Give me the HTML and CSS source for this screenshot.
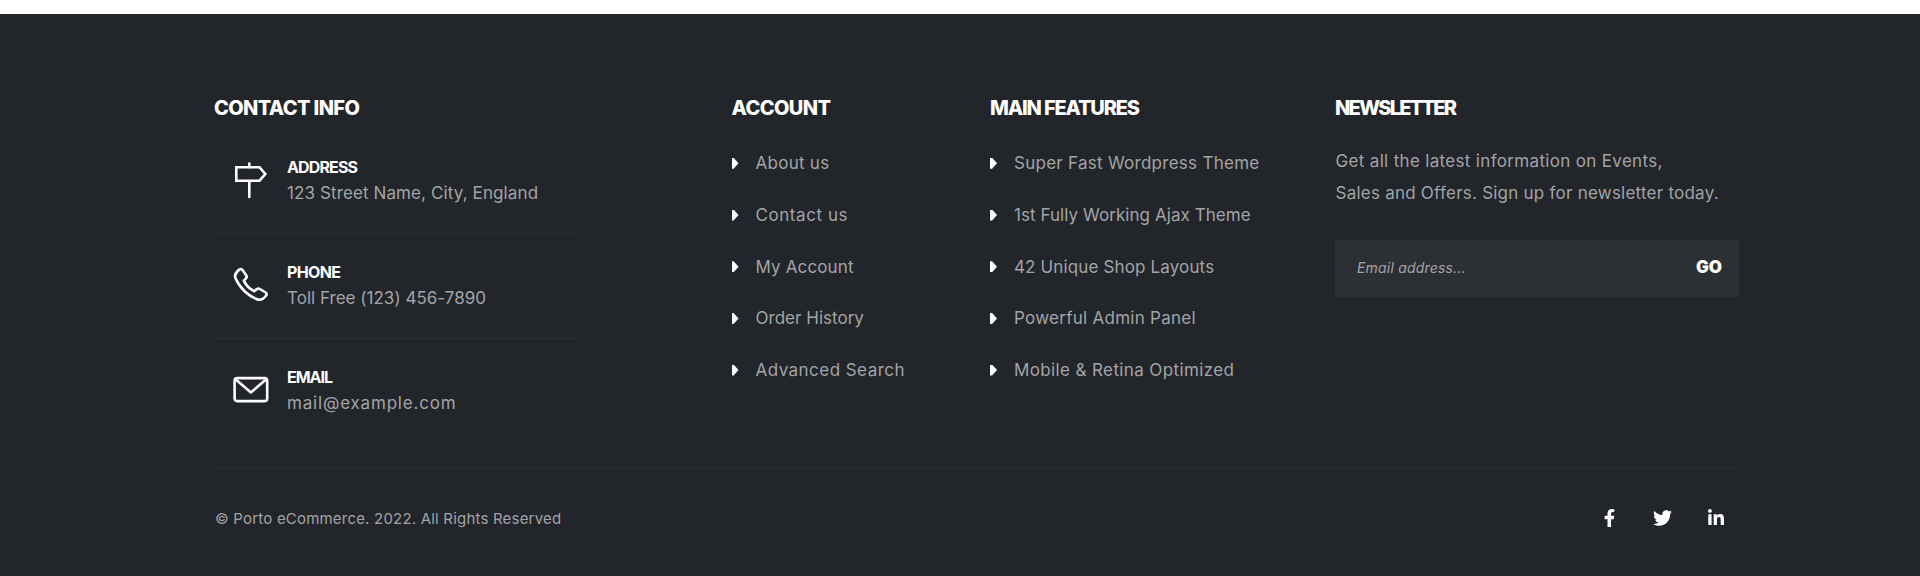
FILE: index.html
```html
<!DOCTYPE html>
<html lang="en">
<head>
<meta charset="utf-8">
<title>Porto eCommerce</title>
<link rel="stylesheet" href="styles.css">
</head>
<body>
<footer class="footer">
  <div class="columns">
    <section class="contact">
      <h3 class="title t-contact">CONTACT INFO</h3>
      <div class="item">
        <svg class="icon sign" viewBox="0 0 40 40"><path d="M19.300 3.500v4M19.300 20.700V37M6.300 7.200H29.500l5.800 6.800-5.800 6.700H6.300z"/></svg>
        <div class="info"><strong class="h-address">ADDRESS</strong><span class="ls-11">123 Street Name, City, England</span></div>
      </div>
      <div class="item">
        <svg class="icon" viewBox="0 0 40 40"><path d="M9.300 4.600c1.300-.9 2.500-.7 3.400.6l3.600 5.200c.8 1.200.6 2.100-.5 3.200l-2 2c2.200 4.700 5.500 8 10.300 10.600l2.400-1.800c1.200-.9 2.100-1.100 3.300-.4l5.900 3.500c1.200.8 1.300 1.700.5 2.900-2.700 3.900-5.300 5.400-9.200 3.900C18.500 31.200 9.600 22.900 5.500 13.300 4 9.600 5.900 7.100 9.300 4.600z"/></svg>
        <div class="info"><strong class="h-phone">PHONE</strong><span class="ls-2">Toll Free (123) 456-7890</span></div>
      </div>
      <div class="item">
        <svg class="icon" viewBox="0 0 40 40"><rect x="4.600" y="8.100" width="32.600" height="23" rx="2.500"/><path d="M5.800 9.500l15.100 13L36 9.500"/></svg>
        <div class="info"><strong class="h-email">EMAIL</strong><span class="ls-81">mail@example.com</span></div>
      </div>
    </section>
    <section class="account">
      <h3 class="title t-account">ACCOUNT</h3>
      <ul class="links">
        <li class="ls-28">About us</li>
        <li class="ls-56">Contact us</li>
        <li class="ls-14">My Account</li>
        <li class="ls-2">Order History</li>
        <li class="ls-46">Advanced Search</li>
      </ul>
    </section>
    <section class="features">
      <h3 class="title t-features">MAIN FEATURES</h3>
      <ul class="links">
        <li class="ls-28">Super Fast Wordpress Theme</li>
        <li class="ls-6">1st Fully Working Ajax Theme</li>
        <li class="ls-14">42 Unique Shop Layouts</li>
        <li class="ls-28">Powerful Admin Panel</li>
        <li class="ls-38">Mobile &amp; Retina Optimized</li>
      </ul>
    </section>
    <section class="newsletter">
      <h3 class="title t-newsletter">NEWSLETTER</h3>
      <p class="blurb"><span class="ls-33">Get all the latest information on Events,</span><br><span class="ls-23">Sales and Offers. Sign up for newsletter today.</span></p>
      <div class="form"><span class="placeholder">Email address...</span><span class="go">GO</span></div>
    </section>
  </div>
  <div class="bottom">
    <span class="copyright">© Porto eCommerce. 2022. All Rights Reserved</span>
    <div class="social">
      <svg class="fb" viewBox="22 0 277 512"><path d="M279.140 288l14.220-92.660h-88.910v-60.130c0-25.350 12.420-50.060 52.240-50.060h40.420V6.260S260.430 0 225.360 0c-73.220 0-121.080 44.380-121.080 124.720v70.620H22.890V288h81.390v224h100.170V288z"/></svg>
      <svg class="tw" viewBox="0 48 512 416"><path d="M459.370 151.716c.325 4.548.325 9.097.325 13.645 0 138.720-105.583 298.558-298.558 298.558-59.452 0-114.680-17.219-161.137-47.106 8.447.974 16.568 1.299 25.340 1.299 49.055 0 94.213-16.568 130.274-44.832-46.132-.975-84.792-31.188-98.112-72.772 6.498.974 12.995 1.624 19.818 1.624 9.421 0 18.843-1.300 27.614-3.573-48.081-9.747-84.143-51.980-84.143-102.985v-1.299c13.969 7.797 30.214 12.670 47.431 13.319-28.264-18.843-46.781-51.005-46.781-87.391 0-19.492 5.197-37.360 14.294-52.954 51.655 63.675 129.300 105.258 216.365 109.807-1.624-7.797-2.599-15.918-2.599-24.040 0-57.828 46.782-104.934 104.934-104.934 30.213 0 57.502 12.670 76.670 33.137 23.715-4.548 46.456-13.320 66.599-25.340-7.798 24.366-24.366 44.833-46.132 57.827 21.117-2.273 41.584-8.122 60.426-16.243-14.292 20.791-32.161 39.308-52.628 54.253z"/></svg>
      <svg class="in" viewBox="0 32 448 448"><path d="M100.280 480H7.400V180.900h92.880zM53.790 140.100C24.090 140.100 0 115.500 0 85.800a53.790 53.790 0 0 1 107.580 0c0 29.700-24.100 54.300-53.790 54.300zM447.900 480h-92.680V334.400c0-34.700-.7-79.200-48.290-79.200-48.290 0-55.690 37.700-55.690 76.700V480h-92.780V180.900h89.080v40.800h1.300c12.400-23.500 42.690-48.300 87.880-48.300 94 0 111.280 61.900 111.280 142.300V480z"/></svg>
    </div>
  </div>
</footer>
</body>
</html>
```

FILE: styles.css
```css
* { box-sizing: border-box; }
body {
  margin: 0;
  padding-top: 14px;
  background: #fff;
  font-family: Inter, "Open Sans", sans-serif;
  font-size: 17px;
  color: #a3a4a6;
}
.footer {
  height: 562px;
  padding: 80px 181px 0 215px;
  background: #22252a;
}
.columns {
  display: grid;
  grid-template-columns: 516.5px 258.5px 345px 404px;
  height: 374px;
  border-bottom: 1px solid #2c2f33;
}
.title {
  margin: 0;
  font-size: 20px;
  font-weight: 800;
  line-height: 28px;
  color: #fff;
  white-space: nowrap;
}
.t-contact { margin-left: -1px; letter-spacing: -.63px; }
.t-account { letter-spacing: -.6px; }
.t-features { letter-spacing: -1.15px; }
.t-newsletter { letter-spacing: -1.75px; }

.contact { width: 363px; }
.contact .title { margin-bottom: 7px; }
.item {
  display: flex;
  gap: 17px;
  height: 105px;
  padding: 25px 0 0 15px;
  border-bottom: 1px solid #2c2f33;
}
.item:last-child { border-bottom: 0; }
.icon {
  width: 40px;
  height: 40px;
  margin-top: 6px;
  fill: none;
  stroke: #fff;
  stroke-width: 2.6;
  stroke-linejoin: round;
  stroke-linecap: round;
}
.sign { stroke-linejoin: miter; }
.info {
  display: flex;
  flex-direction: column;
  line-height: 26px;
  white-space: nowrap;
}
.info strong { font-size: 16px; color: #fff; }
.h-address { letter-spacing: -.87px; }
.h-phone { letter-spacing: -.64px; }
.h-email { letter-spacing: -1.03px; }

.links {
  margin: 15.5px 0 0;
  padding: 0;
  list-style: none;
}
.links li {
  display: flex;
  align-items: center;
  gap: 17px;
  height: 51.7px;
  white-space: nowrap;
}
.links li::before {
  content: "";
  width: 7px;
  height: 11px;
  background: #fff;
  clip-path: polygon(0 0, 30% 0, 100% 50%, 30% 100%, 0 100%);
}

.blurb {
  margin: 23px 0 31px .5px;
  line-height: 32px;
  white-space: nowrap;
}
.form {
  display: flex;
  align-items: center;
  justify-content: space-between;
  height: 57px;
  padding: 0 17px 3px 22px;
  background: #2c2f33;
}
.placeholder { font-size: 14px; font-style: italic; letter-spacing: .19px; }
.go { font-weight: 900; font-size: 17px; color: #fff; }

.bottom {
  display: flex;
  align-items: center;
  justify-content: space-between;
  height: 100px;
  padding-right: 14px;
}
.copyright { font-size: 15px; letter-spacing: .2px; }
.social { display: flex; align-items: center; fill: #fff; }
.fb { width: 11px; height: 18px; margin-right: 38px; }
.tw { width: 19px; height: 16px; margin-right: 35px; }
.in { width: 18px; height: 16px; margin-bottom: 2px; }

.ls-2 { letter-spacing: .02px; }
.ls-6 { letter-spacing: .06px; }
.ls-11 { letter-spacing: .11px; }
.ls-14 { letter-spacing: .14px; }
.ls-23 { letter-spacing: .235px; }
.ls-28 { letter-spacing: .27px; }
.ls-33 { letter-spacing: .33px; }
.ls-38 { letter-spacing: .38px; }
.ls-46 { letter-spacing: .46px; }
.ls-56 { letter-spacing: .56px; }
.ls-81 { letter-spacing: .81px; }
```
